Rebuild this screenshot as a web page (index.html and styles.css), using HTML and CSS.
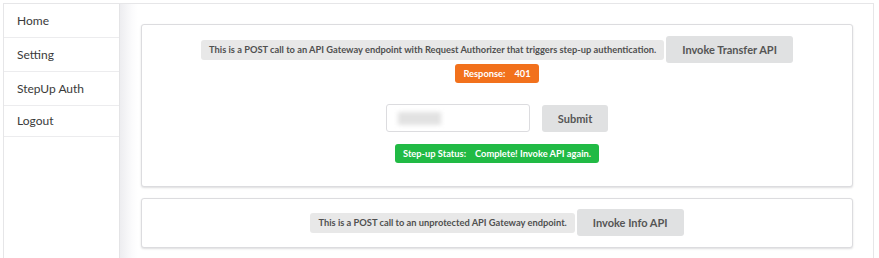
FILE: index.html
```html
<!doctype html>
<html lang="en">
  <head>
    <meta charset="UTF-8" />
    <title>StepUp Auth</title>
    <link rel="stylesheet" href="styles.css">
  </head>
  <body>
    <div class="frame">
      <div class="sidebar">
        <a class="item">Home</a>
        <a class="item">Setting</a>
        <a class="item">StepUp Auth</a>
        <a class="item last">Logout</a>
      </div>

      <div class="pusher">
        <div class="segment first">
          <div class="row">
            <span class="label">This is a POST call to an API Gateway endpoint with Request Authorizer that triggers step-up authentication.</span>
            <button class="button">Invoke Transfer API</button>
          </div>
          <div class="row">
            <span class="label orange">Response:<span class="detail">401</span></span>
          </div>

          <div class="row form">
            <div class="input"><div class="blurred"></div></div>
            <button class="button">Submit</button>
          </div>
          <div class="row status">
            <span class="label green">Step-up Status:<span class="detail">Complete! Invoke API again.</span></span>
          </div>
        </div>

        <div class="segment second">
          <div class="row">
            <span class="label">This is a POST call to an unprotected API Gateway endpoint.</span>
            <button class="button">Invoke Info API</button>
          </div>
        </div>
      </div>
    </div>
  </body>
</html>
```

FILE: styles.css
```css
body {
  margin: 0;
  font-family: Lato, "Open Sans", sans-serif;
  background: #fff;
  color: #333;
}

.frame {
  display: flex;
  margin: 3px 0 0 3px;
  width: 869px;
  height: 262px;
  border: 1px solid #e6e6e8;
  border-bottom: none;
}

.sidebar {
  width: 115px;
  flex-shrink: 0;
  border-right: 1px solid #e4e4e6;
  display: flex;
  flex-direction: column;
}

.sidebar .item {
  display: block;
  height: 33px;
  line-height: 33px;
  padding-left: 13px;
  font-size: 12px;
  color: #3a3a3a;
  border-bottom: 1px solid #ececee;
}

.sidebar .item.last {
  height: 30px;
  line-height: 30px;
}

.pusher {
  flex: 1;
  padding: 20px 20px 0 21px;
  background: linear-gradient(to right, #ededf0, #fbfbfc 12px, #fff 18px);
}

.segment {
  border: 1px solid #dcdcdf;
  border-radius: 3px;
  box-shadow: 0 1px 2px rgba(34, 36, 38, 0.15);
  background: #fff;
  display: flex;
  flex-direction: column;
  align-items: center;
}

.segment.first {
  padding-top: 11px;
  height: 150px;
}

.segment.second {
  margin-top: 11px;
  padding: 10px 0 11px;
}

.row {
  display: flex;
  align-items: center;
  justify-content: center;
}

.label {
  display: inline-flex;
  align-items: center;
  height: 20px;
  padding: 0 8px;
  border-radius: 3px;
  background: #e8e8e8;
  color: #505050;
  font-size: 9.3px;
  font-weight: 700;
}

.label .detail {
  margin-left: 9px;
}

.label.orange {
  background: #f2711c;
  color: #fff;
  margin-top: 1px;
  height: 19px;
  padding: 0 8px;
}

.label.green {
  background: #21ba45;
  color: #fff;
  height: 19px;
  padding: 0 8px;
}

.button {
  font-family: Lato, "Open Sans", sans-serif;
  font-size: 11px;
  font-weight: 700;
  height: 27px;
  padding: 0 16px;
  margin-left: 2px;
  border: none;
  border-radius: 3px;
  background: #e0e1e2;
  color: #555;
  cursor: pointer;
}

.form {
  margin-top: 21px;
}

.input {
  width: 142px;
  height: 26px;
  border: 1px solid #dcdcdf;
  border-radius: 3px;
  margin-right: 10px;
  position: relative;
}

.blurred {
  position: absolute;
  left: 11px;
  top: 7px;
  width: 43px;
  height: 13px;
  background: #e2e2e2;
  filter: blur(2px);
}

.status {
  margin-top: 12px;
}
```
